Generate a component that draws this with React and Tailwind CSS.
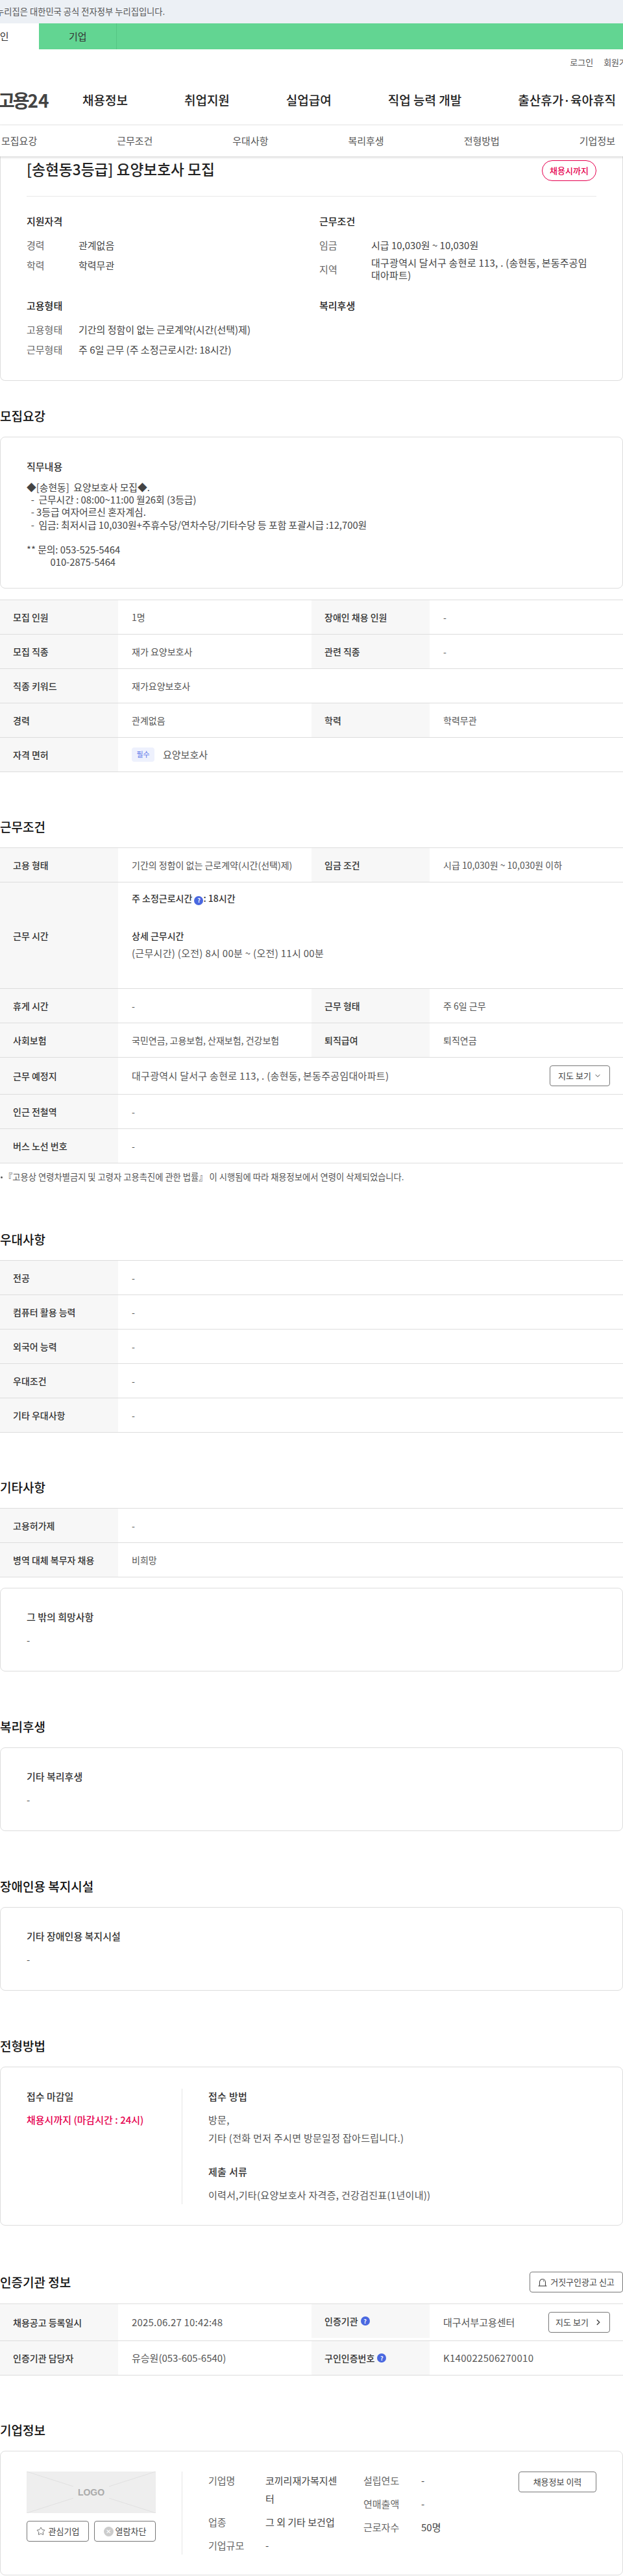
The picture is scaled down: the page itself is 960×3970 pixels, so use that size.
import React from "react";
import { ChevronDown, ChevronRight, Star } from "lucide-react";

const Help = () => (
  <span className="inline-flex items-center justify-center w-[14px] h-[14px] rounded-full bg-[#4a68e0] text-white text-[9px] font-bold leading-none align-[-1px]">?</span>
);

const Heading = ({ children, className = "" }) => (
  <h2 className={`text-[19px] leading-[28px] font-medium text-[#111] mb-[18px] ${className}`}>{children}</h2>
);

const Cell = ({ label, children, wide, h = "h-[52px]" }) => (
  <>
    <div className={`${h} w-[182px] shrink-0 bg-[#f7f7f7] pl-5 flex items-center gap-1 font-medium text-[#333]`}>{label}</div>
    <div className={`${wide ? "flex-1" : "w-[298px]"} pl-[21px] pr-5 flex items-center justify-between text-[#555]`}>{children}</div>
  </>
);

const Row = ({ children }) => <div className="flex text-sm border-b border-[#ddd]">{children}</div>;

const Table = ({ children }) => <div className="border-t border-[#ddd]">{children}</div>;

const TextCard = ({ title, children, className = "" }) => (
  <div className={`rounded-lg border border-[#ddd] px-10 pt-[34px] pb-[37px] ${className}`}>
    <p className="text-[15px] leading-5 font-medium text-[#333] mb-4">{title}</p>
    <div className="text-[15px] leading-5 text-[#555]">{children}</div>
  </div>
);

const Info = ({ label, children, className = "" }) => (
  <div className={`flex text-[15px] leading-[19px] ${className}`}>
    <span className="w-20 shrink-0 text-[#666] self-center">{label}</span>
    <span className="text-[#444] w-[342px]">{children}</span>
  </div>
);

const Group = ({ title, children }) => (
  <div>
    <p className="text-[15px] leading-5 font-medium text-[#222] mb-[17px]">{title}</p>
    <div className="flex flex-col gap-3">{children}</div>
  </div>
);

const CompanyInfo = ({ label, children, w, vw = "" }) => (
  <div className="flex text-[15px] leading-[28px]">
    <span className={`${w} shrink-0 text-[#666]`}>{label}</span>
    <span className={`text-[#444] break-all ${vw}`}>{children}</span>
  </div>
);

const btn = "rounded border border-[#777] text-[13px] text-[#444] flex items-center justify-center";

export default function App() {
  const navs = ["채용정보", "취업지원", "실업급여", "직업 능력 개발", "출산휴가·육아휴직"];
  const tabs = ["모집요강", "근무조건", "우대사항", "복리후생", "전형방법", "기업정보"];

  return (
    <div className="w-[960px] h-[3970px] overflow-hidden bg-white font-['Noto_Sans_CJK_KR',sans-serif] text-[#333]">
      {/* top banner */}
      <div className="h-9 bg-[#ecf0f5] flex items-center text-[13.3px] text-[#555] whitespace-nowrap">
        <span className="-ml-[6px]">누리집은 대한민국 공식 전자정부 누리집입니다.</span>
      </div>
      <div className="h-10 bg-[#62d592] flex text-[15px]">
        <div className="w-[60px] bg-white flex items-center overflow-hidden">
          <span className="-ml-[14px] whitespace-nowrap">개인</span>
        </div>
        <div className="w-[120px] border-r border-[#55c584] pl-[46px] flex items-center">기업</div>
      </div>

      {/* header */}
      <div className="h-10 flex items-center justify-end gap-4 text-[13px] text-[#555] -mr-[18px] whitespace-nowrap">
        <span>로그인</span>
        <span>회원가입</span>
      </div>
      <div className="h-[77px] border-b border-[#e5e5e5] flex items-center whitespace-nowrap">
        <span className="w-[127px] shrink-0 -indent-[3px] text-[28px] font-bold text-[#444]">
          <span className="tracking-[-3px]">고용</span>24
        </span>
        <div className="flex text-[19px] font-medium text-[#222]">
          {navs.map((n, i) => (
            <span key={i} className={i === 4 ? "" : "mr-[87px]"}>{n}</span>
          ))}
        </div>
      </div>
      <div className="relative z-10 h-12 bg-white flex justify-between items-center pl-[2px] pr-3 text-[15px] text-[#555] shadow-[0_2px_3px_rgba(0,0,0,0.15)]">
        {tabs.map(t => <span key={t}>{t}</span>)}
      </div>

      {/* summary */}
      <div className="rounded-b-lg border border-t-0 border-[#ddd] h-[346px] px-10">
        <div className="h-[62px] flex items-start justify-between border-b border-[#e8e8e8] pt-[6px]">
          <h1 className="text-[22.7px] leading-7 font-medium text-[#222]">[송현동3등급] 요양보호사 모집</h1>
          <span className="w-[84px] h-8 rounded-full border border-[#e6004f] text-[#e6004f] text-[13px] font-medium flex items-center justify-center">채용시까지</span>
        </div>
        <div className="grid grid-cols-[451px_1fr] pt-7">
          <Group title="지원자격">
            <Info label="경력">관계없음</Info>
            <Info label="학력">학력무관</Info>
          </Group>
          <Group title="근무조건">
            <Info label="임금">시급 10,030원 ~ 10,030원</Info>
            <Info label="지역" className="-mt-1 tracking-[0.25px]">대구광역시 달서구 송현로 113, . (송현동, 본동주공임대아파트)</Info>
          </Group>
          <div className="mt-7">
            <Group title="고용형태">
              <Info label="고용형태">기간의 정함이 없는 근로계약(시간(선택)제)</Info>
              <Info label="근무형태">주 6일 근무 (주 소정근로시간: 18시간)</Info>
            </Group>
          </div>
          <div className="mt-7">
            <Group title="복리후생" />
          </div>
        </div>
      </div>

      {/* 모집요강 */}
      <Heading className="mt-10">모집요강</Heading>
      <div className="h-[234px] rounded-lg border border-[#ddd] px-10 pt-[35px]">
        <p className="text-[15px] leading-5 font-medium text-[#333] mb-[12px]">직무내용</p>
        <pre className="font-['Noto_Sans_CJK_KR',sans-serif] text-[14.8px] leading-[19.2px] text-[#444]">{`◆[송현동]  요양보호사 모집◆.
  -  근무시간 : 08:00~11:00 월26회 (3등급)
  - 3등급 여자어르신 혼자계심.
  -  임금: 최저시급 10,030원+주휴수당/연차수당/기타수당 등 포함 포괄시급 :12,700원

** 문의: 053-525-5464
           010-2875-5464`}</pre>
      </div>
      <div className="mt-[17px]">
        <Table>
          <Row><Cell label="모집 인원">1명</Cell><Cell label="장애인 채용 인원">-</Cell></Row>
          <Row><Cell label="모집 직종">재가 요양보호사</Cell><Cell label="관련 직종">-</Cell></Row>
          <Row><Cell label="직종 키워드" wide>재가요양보호사</Cell></Row>
          <Row><Cell label="경력">관계없음</Cell><Cell label="학력">학력무관</Cell></Row>
          <Row>
            <Cell label="자격 면허" wide>
              <span className="flex items-center gap-[13px] text-[15px]">
                <span className="w-[35px] h-[22px] rounded bg-[#eef1fd] text-[#5a74e8] text-[11px] flex items-center justify-center">필수</span>
                요양보호사
              </span>
            </Cell>
          </Row>
        </Table>
      </div>

      {/* 근무조건 */}
      <Heading className="mt-[70px]">근무조건</Heading>
      <Table>
        <Row><Cell label="고용 형태">기간의 정함이 없는 근로계약(시간(선택)제)</Cell><Cell label="임금 조건">시급 10,030원 ~ 10,030원 이하</Cell></Row>
        <Row>
          <Cell label="근무 시간" wide h="h-[163px]">
            <div className="self-start pt-[14px] leading-5">
              <p className="font-medium text-[#333]">주 소정근로시간 <Help />: 18시간</p>
              <p className="font-medium text-[#333] mt-[37px]">상세 근무시간</p>
              <p className="mt-[7px] text-[15px] tracking-[0.3px]">(근무시간) (오전) 8시 00분 ~ (오전) 11시 00분</p>
            </div>
          </Cell>
        </Row>
        <Row><Cell label="휴게 시간">-</Cell><Cell label="근무 형태">주 6일 근무</Cell></Row>
        <Row><Cell label="사회보험">국민연금, 고용보험, 산재보험, 건강보험</Cell><Cell label="퇴직급여">퇴직연금</Cell></Row>
        <Row>
          <Cell label="근무 예정지" wide h="h-[56px]">
            <span className="text-[15px] tracking-[0.3px]">대구광역시 달서구 송현로 113, . (송현동, 본동주공임대아파트)</span>
            <button className={`${btn} w-[93px] h-8 gap-1`}>
              지도 보기 <ChevronDown size={12} />
            </button>
          </Cell>
        </Row>
        <Row><Cell label="인근 전철역" wide>-</Cell></Row>
        <Row><Cell label="버스 노선 번호" wide>-</Cell></Row>
      </Table>
      <p className="mt-[11px] h-5 flex items-center text-[13.3px] text-[#555] whitespace-nowrap">
        <span className="w-[3px] h-[3px] rounded-full bg-[#555] ml-[1px] mr-[2px]"></span>
        『고용상 연령차별금지 및 고령자 고용촉진에 관한 법률』 이 시행됨에 따라 채용정보에서 연령이 삭제되었습니다.
      </p>

      {/* 우대사항 */}
      <Heading className="mt-[72px]">우대사항</Heading>
      <Table>
        {["전공", "컴퓨터 활용 능력", "외국어 능력", "우대조건", "기타 우대사항"].map(l => (
          <Row key={l}><Cell label={l} wide>-</Cell></Row>
        ))}
      </Table>

      {/* 기타사항 */}
      <Heading className="mt-[70px]">기타사항</Heading>
      <Table>
        <Row><Cell label="고용허가제" wide>-</Cell></Row>
        <Row><Cell label="병역 대체 복무자 채용" wide>비희망</Cell></Row>
      </Table>
      <TextCard title="그 밖의 희망사항" className="mt-4">-</TextCard>

      <Heading className="mt-[71px]">복리후생</Heading>
      <TextCard title="기타 복리후생">-</TextCard>

      <Heading className="mt-[71px]">장애인용 복지시설</Heading>
      <TextCard title="기타 장애인용 복지시설">-</TextCard>

      {/* 전형방법 */}
      <Heading className="mt-[71px]">전형방법</Heading>
      <div className="h-[245px] rounded-lg border border-[#ddd] pl-10 pt-[33px] flex text-[15px] leading-5">
        <div className="w-[240px] h-[178px] border-r border-[#e5e5e5] pt-[2px]">
          <p className="font-medium text-[#333]">접수 마감일</p>
          <p className="mt-4 font-medium text-[#e6004f]">채용시까지 (마감시간 : 24시)</p>
        </div>
        <div className="pl-10 pt-[2px] text-[#555] tracking-[0.3px]">
          <p className="font-medium text-[#333]">접수 방법</p>
          <p className="mt-4">방문,</p>
          <p className="mt-2">기타 (전화 먼저 주시면 방문일정 잡아드립니다.)</p>
          <p className="mt-8 font-medium text-[#333]">제출 서류</p>
          <p className="mt-4">이력서,기타(요양보호사 자격증, 건강검진표(1년이내))</p>
        </div>
      </div>

      {/* 인증기관 */}
      <div className="mt-[71px] flex items-center justify-between h-8 mb-[17px]">
        <h2 className="text-[19px] font-medium text-[#111]">인증기관 정보</h2>
        <button className={`${btn} w-[144px] h-8 gap-[5px]`}>
          <svg width="14" height="13" viewBox="0 0 14 13" fill="none" stroke="#444" strokeWidth="1.1">
            <path d="M2.5 12V6a4.5 4.5 0 0 1 9 0v6" />
            <path d="M0.5 12h13" />
            <path d="M8 3.5l1.2 1.4" />
          </svg>
          거짓구인광고 신고
        </button>
      </div>
      <Table>
        <Row>
          <Cell label="채용공고 등록일시" h="h-[56px]"><span className="text-[15px] tracking-[0.2px]">2025.06.27 10:42:48</span></Cell>
          <Cell label={<>인증기관 <Help /></>}>
            <span className="text-[15px]">대구서부고용센터</span>
            <button className={`${btn} w-[95px] h-8 gap-2`}>
              지도 보기 <ChevronRight size={14} strokeWidth={2.5} />
            </button>
          </Cell>
        </Row>
        <Row>
          <Cell label="인증기관 담당자"><span className="text-[15px]">유승원(053-605-6540)</span></Cell>
          <Cell label={<>구인인증번호 <Help /></>}><span className="text-[15px] tracking-[0.3px]">K140022506270010</span></Cell>
        </Row>
      </Table>

      {/* 기업정보 */}
      <Heading className="mt-[70px]">기업정보</Heading>
      <div className="h-[192px] rounded-lg border border-[#ddd] px-10 pt-[31px] flex">
        <div className="w-[240px] h-[128px] border-r border-[#e5e5e5]">
          <div className="relative w-[199px] h-16 bg-[#eeeeee] flex items-center justify-center">
            <svg className="absolute inset-0" width="199" height="64" viewBox="0 0 199 64" stroke="#e0e0e0" fill="none">
              <path d="M0 0L72 23M199 0L127 23M0 64L72 41M199 64L127 41" />
            </svg>
            <span className="relative font-['Liberation_Sans',sans-serif] text-sm font-bold text-[#aaa]">LOGO</span>
          </div>
          <div className="flex gap-2 mt-3 w-[199px]">
            <button className={`${btn} w-24 h-8 gap-[5px]`}>
              <Star size={14} strokeWidth={1.3} /> 관심기업
            </button>
            <button className={`${btn} w-[95px] h-8 gap-[3px]`}>
              <span className="w-[15px] h-[15px] rounded-full bg-[#ccc] text-white text-[10px] leading-none flex items-center justify-center">✕</span> 열람차단
            </button>
          </div>
        </div>
        <div className="w-[279px] pl-10 shrink-0 flex flex-col gap-2">
          <CompanyInfo label="기업명" w="w-[88px]" vw="w-[112px]">코끼리재가복지센터</CompanyInfo>
          <CompanyInfo label="업종" w="w-[88px]" vw="w-[112px]">그 외 기타 보건업</CompanyInfo>
          <CompanyInfo label="기업규모" w="w-[88px]">-</CompanyInfo>
        </div>
        <div className="flex flex-col gap-2 w-[239px] shrink-0">
          <CompanyInfo label="설립연도" w="w-[89px]">-</CompanyInfo>
          <CompanyInfo label="연매출액" w="w-[89px]">-</CompanyInfo>
          <CompanyInfo label="근로자수" w="w-[89px]">50명</CompanyInfo>
        </div>
        <button className={`${btn} w-[120px] h-8 text-[13.5px] shrink-0`}>채용정보 이력</button>
      </div>
    </div>
  );
}
